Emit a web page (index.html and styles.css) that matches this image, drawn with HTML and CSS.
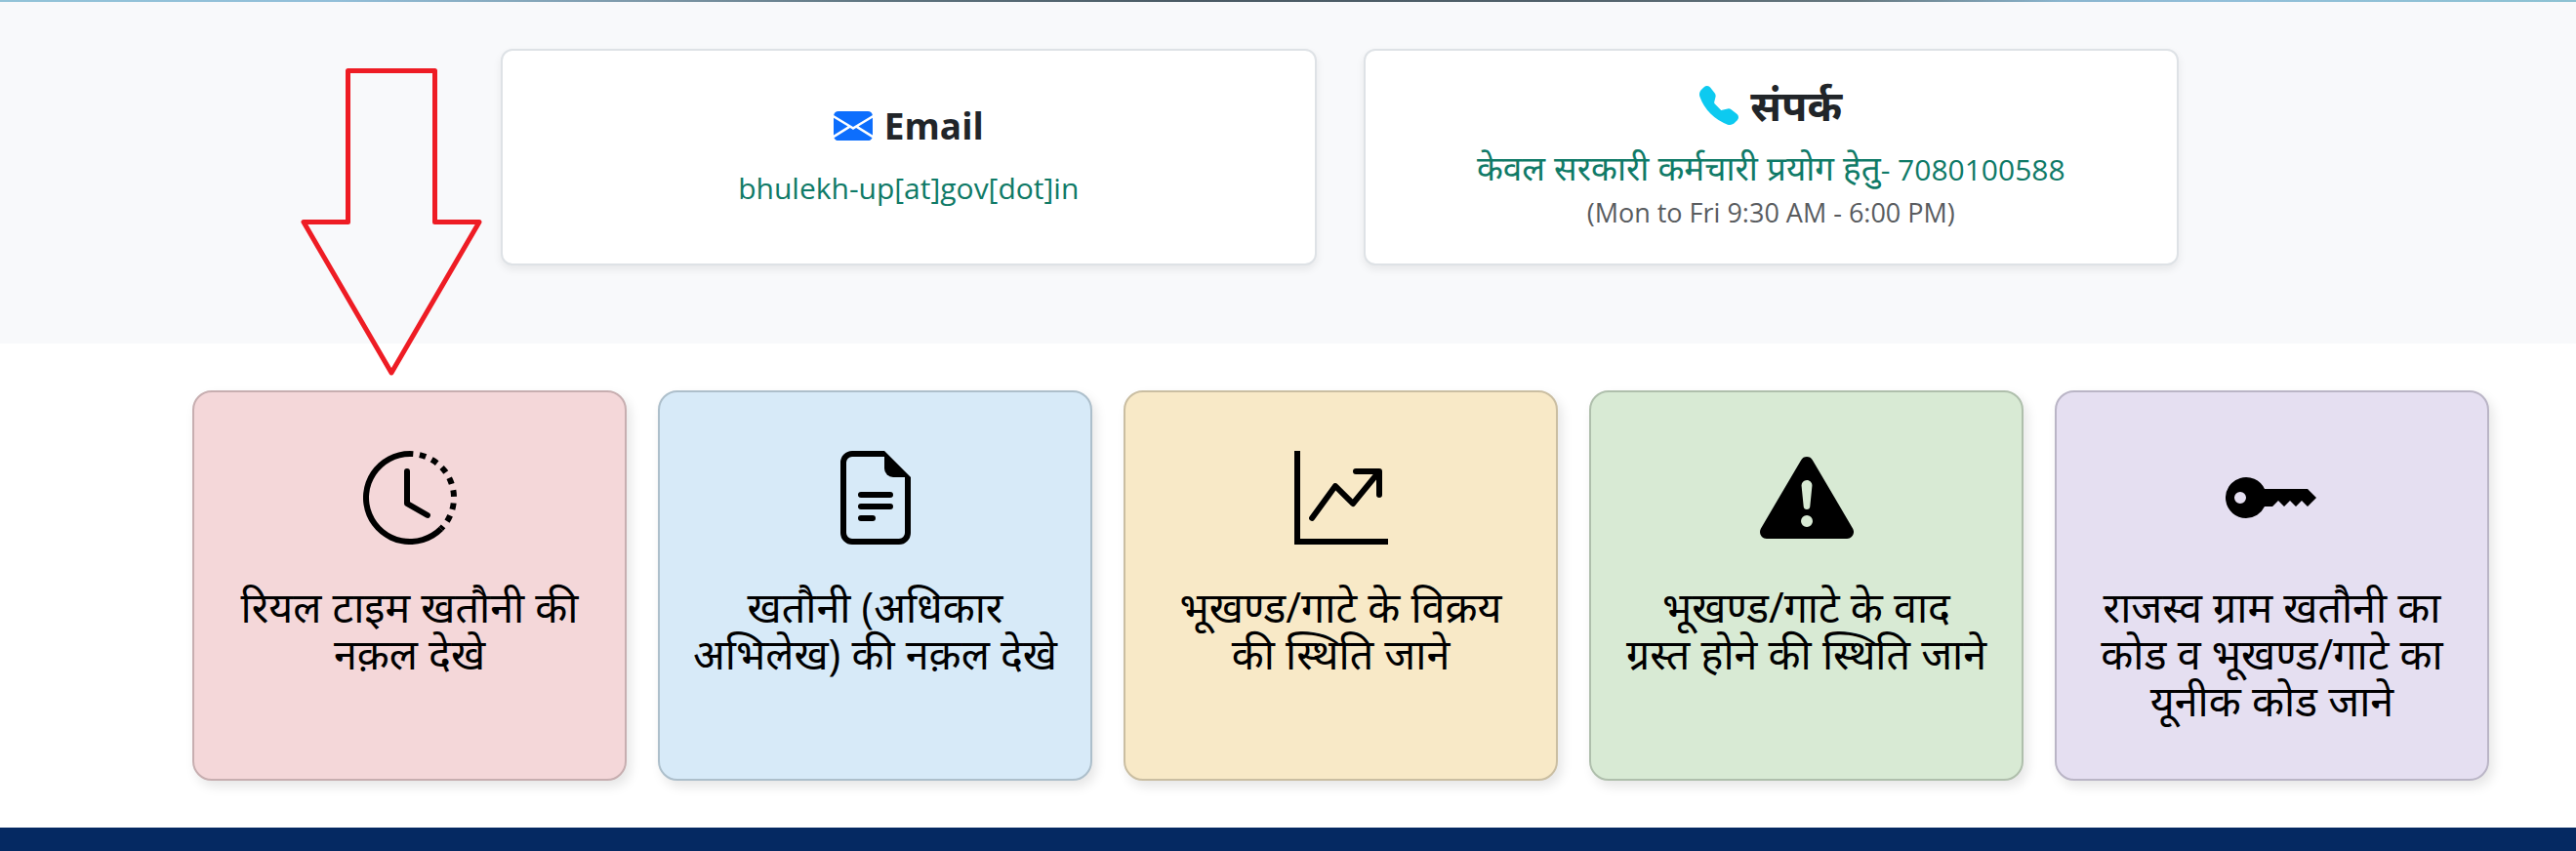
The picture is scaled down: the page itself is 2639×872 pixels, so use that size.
FILE: index.html
```html
<!DOCTYPE html>
<html lang="hi">
<head>
    <meta charset="UTF-8">
    <title>भूलेख</title>
    <link rel="stylesheet" href="styles.css">
</head>
<body>
    <div class="banner-edge"></div>

    <!-- contact details -->
    <section class="contact">
        <div class="contact-card">
            <h5 class="contact-title">
                <svg class="contact-icon mail" viewBox="0 0 16 16" aria-hidden="true"><path d="M.05 3.555A2 2 0 0 1 2 2h12a2 2 0 0 1 1.95 1.555L8 8.414zM0 4.697v7.104l5.803-3.558zM6.761 8.83l-6.57 4.027A2 2 0 0 0 2 14h12a2 2 0 0 0 1.808-1.144l-6.57-4.027L8 9.586zm3.436-.586L16 11.801V4.697z"/></svg>
                Email
            </h5>
            <p class="contact-text">bhulekh-up[at]gov[dot]in</p>
        </div>
        <div class="contact-card">
            <h5 class="contact-title hindi">
                <svg class="contact-icon phone" viewBox="0 0 16 16" aria-hidden="true"><path fill-rule="evenodd" d="M1.885.511a1.745 1.745 0 0 1 2.61.163L6.29 2.98c.329.423.445.974.315 1.494l-.547 2.19a.68.68 0 0 0 .178.643l2.457 2.457a.68.68 0 0 0 .644.178l2.189-.547a1.75 1.75 0 0 1 1.494.315l2.306 1.794c.829.645.905 1.87.163 2.611l-1.034 1.034c-.74.74-1.846 1.065-2.877.702a18.6 18.6 0 0 1-7.01-4.42 18.6 18.6 0 0 1-4.42-7.009c-.362-1.03-.037-2.137.703-2.877z"/></svg>
                संपर्क
            </h5>
            <p class="contact-text"><span class="hindi-text">केवल सरकारी कर्मचारी प्रयोग हेतु</span>- 7080100588</p>
            <p class="contact-time">(Mon to Fri 9:30 AM - 6:00 PM)</p>
        </div>
    </section>

    <!-- service tiles -->
    <main class="services">
        <a class="tile pink" href="#">
            <svg class="tile-icon" viewBox="0 0 16 16" aria-hidden="true">
                <path d="M8.515 1.019A7 7 0 0 0 8 1V0a8 8 0 0 1 .589.022zm2.004.45a7 7 0 0 0-.985-.299l.219-.976q.576.129 1.126.342zm1.37.71a7 7 0 0 0-.439-.27l.493-.87a8 8 0 0 1 .979.654l-.615.789a7 7 0 0 0-.418-.302zm1.834 1.79a7 7 0 0 0-.653-.796l.724-.69q.406.429.747.91zm.744 1.352a7 7 0 0 0-.214-.468l.893-.45a8 8 0 0 1 .45 1.088l-.95.313a7 7 0 0 0-.179-.483m.53 2.507a7 7 0 0 0-.1-1.025l.985-.17q.1.58.116 1.17zm-.131 1.538q.05-.254.081-.51l.993.123a8 8 0 0 1-.23 1.155l-.964-.267q.069-.247.12-.501m-.952 2.379q.276-.436.486-.908l.914.405q-.24.54-.555 1.038zm-.964 1.205q.183-.183.35-.378l.758.653a8 8 0 0 1-.401.432z"/>
                <path d="M8 1a7 7 0 1 0 4.95 11.95l.707.707A8.001 8.001 0 1 1 8 0z"/>
                <path d="M7.5 3a.5.5 0 0 1 .5.5v5.21l3.248 1.856a.5.5 0 0 1-.496.868l-3.5-2A.5.5 0 0 1 7 9V3.5a.5.5 0 0 1 .5-.5"/>
            </svg>
            <span class="tile-title">रियल टाइम खतौनी की नक़ल देखे</span>
        </a>
        <a class="tile blue" href="#">
            <svg class="tile-icon" viewBox="0 0 16 16" aria-hidden="true">
                <path d="M4 0h5.5v1H4a1 1 0 0 0-1 1v12a1 1 0 0 0 1 1h8a1 1 0 0 0 1-1V4.5h1V14a2 2 0 0 1-2 2H4a2 2 0 0 1-2-2V2a2 2 0 0 1 2-2z"/>
                <path d="M9.5 3V0L14 4.5h-3A1.5 1.5 0 0 1 9.5 3z"/>
                <path d="M5 11.5a.5.5 0 0 1 .5-.5h2a.5.5 0 0 1 0 1h-2a.5.5 0 0 1-.5-.5zm0-2a.5.5 0 0 1 .5-.5h5a.5.5 0 0 1 0 1h-5a.5.5 0 0 1-.5-.5zm0-2a.5.5 0 0 1 .5-.5h5a.5.5 0 0 1 0 1h-5A.5.5 0 0 1 5 7.5z"/>
            </svg>
            <span class="tile-title">खतौनी (अधिकार अभिलेख) की नक़ल देखे</span>
        </a>
        <a class="tile yellow" href="#">
            <svg class="tile-icon" viewBox="0 0 16 16" aria-hidden="true">
                <path fill-rule="evenodd" d="M0 0h1v15h15v1H0zm10 3.5a.5.5 0 0 1 .5-.5h4a.5.5 0 0 1 .5.5v4a.5.5 0 0 1-1 0V4.9l-3.613 4.417a.5.5 0 0 1-.74.037L7.06 6.767l-3.656 5.027a.5.5 0 0 1-.808-.588l4-5.5a.5.5 0 0 1 .758-.06l2.609 2.61L13.445 4H10.5a.5.5 0 0 1-.5-.5"/>
            </svg>
            <span class="tile-title">भूखण्ड/गाटे के विक्रय की&nbsp;स्थिति जाने</span>
        </a>
        <a class="tile green" href="#">
            <svg class="tile-icon" viewBox="0 0 16 16" aria-hidden="true">
                <path d="M8.982 1.566a1.13 1.13 0 0 0-1.96 0L.165 13.233c-.457.778.091 1.767.98 1.767h13.713c.889 0 1.438-.99.98-1.767zM8 5c.535 0 .954.462.9.995l-.35 3.507a.552.552 0 0 1-1.1 0L7.1 5.995A.905.905 0 0 1 8 5m.002 6a1 1 0 1 1 0 2 1 1 0 0 1 0-2"/>
            </svg>
            <span class="tile-title">भूखण्ड/गाटे के वाद ग्रस्त&nbsp;होने की स्थिति जाने</span>
        </a>
        <a class="tile purple" href="#">
            <svg class="tile-icon" viewBox="0 0 16 16" aria-hidden="true">
                <path d="M3.5 11.5a3.5 3.5 0 1 1 3.163-5H14L15.5 8 14 9.5l-1-1-1 1-1-1-1 1-1-1-1 1H6.663a3.5 3.5 0 0 1-3.163 2M2.5 9a1 1 0 1 0 0-2 1 1 0 0 0 0 2"/>
            </svg>
            <span class="tile-title">राजस्व ग्राम खतौनी का कोड व भूखण्ड/गाटे का यूनीक कोड जाने</span>
        </a>
    </main>

    <footer class="footer"></footer>

    <!-- arrow pointing at the first tile -->
    <svg class="arrow" viewBox="0 0 186 318" aria-hidden="true">
        <path d="M48.500 4.500H137.500V159.500H183L93 314 3 159.500H48.500Z"/>
    </svg>
</body>
</html>
```

FILE: styles.css
```css
* {
    box-sizing: border-box;
}
body {
    margin: 0;
    position: relative;
    min-height: 100vh;
    display: flex;
    flex-direction: column;
    background-color: #ffffff;
    color: #212529;
    font-family: "Open Sans", "Noto Sans", sans-serif;
}
.banner-edge {
    height: 2px;
    background: linear-gradient(90deg, #92c3d8 0%, #92bfd9 13%, #7d98a8 25%, #5f7580 34%, #4a5a64 46%, #50606a 60%, #66787f 72%, #8ab5ce 80%, #92bfd9 86%, #8dc2d3 100%);
}

/* contact cards */
.contact {
    display: grid;
    grid-template-columns: 1fr 1fr;
    gap: 48px;
    padding: 48px 407px 80px 513px;
    background-color: #f8f9fb;
}
.contact-card {
    display: flex;
    flex-direction: column;
    align-items: center;
    justify-content: center;
    min-height: 222px;
    background-color: #ffffff;
    border: 2px solid #dee2e6;
    border-radius: 12px;
    box-shadow: 0 4px 8px rgba(0, 0, 0, 0.075);
    text-align: center;
}
.contact-title {
    display: flex;
    align-items: center;
    gap: 12px;
    margin: 0 0 16px;
    font-size: 37px;
    font-weight: bold;
    line-height: 48px;
}
.contact-title.hindi {
    font-size: 43px;
}
.contact-icon {
    width: 40px;
    height: 40px;
}
.mail {
    fill: #0d6efd;
}
.phone {
    fill: #0dcaf0;
}
.contact-text {
    margin: 0;
    color: #0f7a67;
    font-size: 30px;
    line-height: 48px;
}
.hindi-text {
    font-size: 35px;
}
.contact-time {
    margin: 0;
    color: #595c5f;
    font-size: 27px;
    line-height: 40px;
}

/* service tiles */
.services {
    display: grid;
    grid-template-columns: repeat(5, 1fr);
    gap: 32px;
    padding: 48px 89px 48px 197px;
}
.tile {
    display: flex;
    flex-direction: column;
    align-items: center;
    gap: 40px;
    padding: 60px 30px 56px;
    border: 2px solid;
    border-radius: 20px;
    box-shadow: 4px 6px 12px rgba(0, 0, 0, 0.1);
    color: #000000;
    text-align: center;
    text-decoration: none;
}
.tile-icon {
    width: 96px;
    height: 96px;
}
.tile-title {
    font-size: 43px;
    line-height: 48px;
}
.pink {
    background-color: #f4d7d9;
    border-color: #c7aeb0;
}
.blue {
    background-color: #d7eaf8;
    border-color: #adbfcb;
}
.yellow {
    background-color: #f8e9c7;
    border-color: #cabea2;
}
.green {
    background-color: #d8ead4;
    border-color: #afbfac;
}
.purple {
    background-color: #e5dff1;
    border-color: #bab5c6;
}

.footer {
    flex: 1;
    background-color: #052962;
}

.arrow {
    position: absolute;
    top: 68px;
    left: 308px;
    width: 186px;
    height: 318px;
    fill: none;
    stroke: #ee1c24;
    stroke-width: 5;
    stroke-linejoin: round;
}
```
